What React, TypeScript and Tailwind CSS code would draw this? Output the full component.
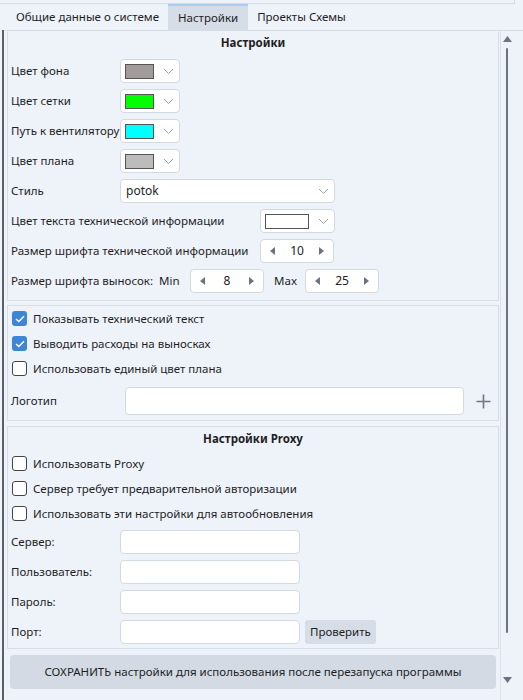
import React from "react";

const font = { fontFamily: '"Noto Sans", "Open Sans", sans-serif' };

function Chevron() {
  return (
    <svg width="11" height="7" viewBox="0 0 11 7" className="shrink-0">
      <path d="M1 1 L5.5 5.5 L10 1" fill="none" stroke="#9aa3ad" strokeWidth="1" />
    </svg>
  );
}

function ColorCombo({ color, wide = false }: { color: string; wide?: boolean }) {
  return (
    <div
      className={`flex items-center h-[24px] bg-white border border-[#d3d9e1] rounded-[4px] pl-[4px] pr-[5px] gap-[9px] ${
        wide ? "w-[75px]" : "w-[60px]"
      }`}
    >
      <div className={`h-[15px] border border-[#555] ${wide ? "w-[48px]" : "w-[33px]"}`} style={{ background: color }} />
      <Chevron />
    </div>
  );
}

function Spin({ value }: { value: string }) {
  return (
    <div className="flex items-center justify-between w-[74px] h-[24px] bg-white border border-[#d3d9e1] rounded-[4px] px-[9px] text-[12px] text-[#222] shrink-0">
      <svg width="5" height="8" viewBox="0 0 5 8">
        <path d="M5 0 L0 4 L5 8 Z" fill="#6b7380" />
      </svg>
      <span>{value}</span>
      <svg width="5" height="8" viewBox="0 0 5 8">
        <path d="M0 0 L5 4 L0 8 Z" fill="#6b7380" />
      </svg>
    </div>
  );
}

function Check({ checked, label }: { checked?: boolean; label: string }) {
  return (
    <div className="flex items-center h-[25px] gap-[6px] pl-[4px]">
      {checked ? (
        <div className="w-[15px] h-[15px] rounded-[3px] bg-[#3d86d6] flex items-center justify-center">
          <svg width="10" height="8" viewBox="0 0 10 8">
            <path d="M1 4 L3.8 6.6 L9 1.2" fill="none" stroke="white" strokeWidth="1.4" />
          </svg>
        </div>
      ) : (
        <div className="w-[15px] h-[15px] rounded-[3px] bg-white border border-[#444]" />
      )}
      <span className="whitespace-nowrap">{label}</span>
    </div>
  );
}

function TextInput({ w }: { w: string }) {
  return <div className={`h-[24px] bg-white border border-[#d3d9e1] rounded-[4px] ${w}`} />;
}

export default function App() {
  return (
    <div className="w-[523px] h-[700px] bg-[#eef2f9] overflow-hidden text-[#1e1e1e] text-[11.5px]" style={font}>
      {/* top frame */}
      <div className="h-[4px] w-[515px] border-b border-r border-[#d5dbe3]" />

      {/* tabs */}
      <div className="flex h-[26px] pl-[7px]">
        <div className="px-[9px] flex items-center">Общие данные о системе</div>
        <div className="px-[10px] flex items-center bg-[#d6dde6] border-t-2 border-[#a9cdf0]">Настройки</div>
        <div className="px-[9px] flex items-center">Проекты Схемы</div>
      </div>

      <div className="flex h-[670px]">
        <div className="w-[2px] ml-[2px] bg-[#5b5f66]" />
        <div className="flex-1 flex border-t border-[#d5dbe3] ml-[1px]">
          <div className="flex-1 flex flex-col pl-[2px] pt-[1px]">
            {/* section 1 */}
            <div className="border border-[#d8dee6] border-t-0 flex flex-col pb-[7px] whitespace-nowrap">
              <div className="text-center font-bold h-[22px] leading-[22px]">Настройки</div>
              <div className="flex flex-col gap-[6px] pl-[3px] pt-[5px]">
                <div className="flex items-center">
                  <span className="w-[109px]">Цвет фона</span>
                  <ColorCombo color="#a19b9b" />
                </div>
                <div className="flex items-center">
                  <span className="w-[109px]">Цвет сетки</span>
                  <ColorCombo color="#00ff00" />
                </div>
                <div className="flex items-center">
                  <span className="w-[109px]">Путь к вентилятору</span>
                  <ColorCombo color="#00ffff" />
                </div>
                <div className="flex items-center">
                  <span className="w-[109px]">Цвет плана</span>
                  <ColorCombo color="#bdbcbc" />
                </div>
                <div className="flex items-center">
                  <span className="w-[109px]">Стиль</span>
                  <div className="flex items-center justify-between w-[215px] h-[24px] bg-white border border-[#d3d9e1] rounded-[4px] pl-[5px] pr-[5px] text-[12px]">
                    <span>potok</span>
                    <Chevron />
                  </div>
                </div>
                <div className="flex items-center">
                  <span className="w-[249px]">Цвет текста технической информации</span>
                  <ColorCombo color="#ffffff" wide />
                </div>
                <div className="flex items-center">
                  <span className="w-[249px]">Размер шрифта технической информации</span>
                  <Spin value="10" />
                </div>
                <div className="flex items-center">
                  <span className="w-[148px]">Размер шрифта выносок:</span>
                  <span className="w-[31px]">Min</span>
                  <Spin value="8" />
                  <span className="w-[41px] pl-[10px]">Max</span>
                  <Spin value="25" />
                </div>
              </div>
            </div>

            {/* section 2 */}
            <div className="border border-[#d8dee6] mt-[4px] flex flex-col pb-[5px]">
              <Check checked label="Показывать технический текст" />
              <Check checked label="Выводить расходы на выносках" />
              <Check label="Использовать единый цвет плана" />
              <div className="flex items-center mt-[6px] pl-[3px]">
                <span className="w-[114px]">Логотип</span>
                <div className="w-[339px] h-[28px] bg-white border border-[#d3d9e1] rounded-[4px]" />
                <svg width="15" height="15" viewBox="0 0 15 15" className="ml-[12px]">
                  <path d="M7.5 0.5 V14.5 M0.5 7.5 H14.5" stroke="#6f7782" strokeWidth="1.6" />
                </svg>
              </div>
            </div>

            {/* section 3 */}
            <div className="border border-[#d8dee6] mt-[5px] flex flex-col pb-[4px]">
              <div className="text-center font-bold h-[24px] leading-[24px]">Настройки Proxy</div>
              <Check label="Использовать Proxy" />
              <Check label="Сервер требует предварительной авторизации" />
              <Check label="Использовать эти настройки для автообновления" />
              <div className="flex flex-col gap-[6px] pl-[3px] pt-[4px]">
                <div className="flex items-center">
                  <span className="w-[109px]">Сервер:</span>
                  <TextInput w="w-[180px]" />
                </div>
                <div className="flex items-center">
                  <span className="w-[109px]">Пользователь:</span>
                  <TextInput w="w-[180px]" />
                </div>
                <div className="flex items-center">
                  <span className="w-[109px]">Пароль:</span>
                  <TextInput w="w-[180px]" />
                </div>
                <div className="flex items-center">
                  <span className="w-[109px]">Порт:</span>
                  <TextInput w="w-[180px]" />
                  <div className="ml-[5px] h-[24px] px-[5px] bg-[#d6dde6] rounded-[3px] flex items-center">Проверить</div>
                </div>
              </div>
            </div>

            {/* save */}
            <div className="mx-[3px] mt-[6px] h-[34px] bg-[#d3dae3] rounded-[4px] flex items-center justify-center">
              СОХРАНИТЬ настройки для использования после перезапуска программы
            </div>
          </div>

          {/* scrollbar */}
          <div className="w-[13px] ml-[1px] mr-[10px] flex flex-col items-center pt-[5px] border-l border-[#dde2ea]">
            <svg width="9" height="6" viewBox="0 0 9 6">
              <path d="M0 6 L4.5 0 L9 6 Z" fill="#6b7380" />
            </svg>
            <div className="w-[2px] h-[585px] bg-[#6b7380] mt-[6px] rounded-full" />
            <div className="flex-1" />
            <svg width="9" height="6" viewBox="0 0 9 6" className="mb-[17px]">
              <path d="M0 0 L4.5 6 L9 0 Z" fill="#6b7380" />
            </svg>
          </div>
        </div>
      </div>
    </div>
  );
}
